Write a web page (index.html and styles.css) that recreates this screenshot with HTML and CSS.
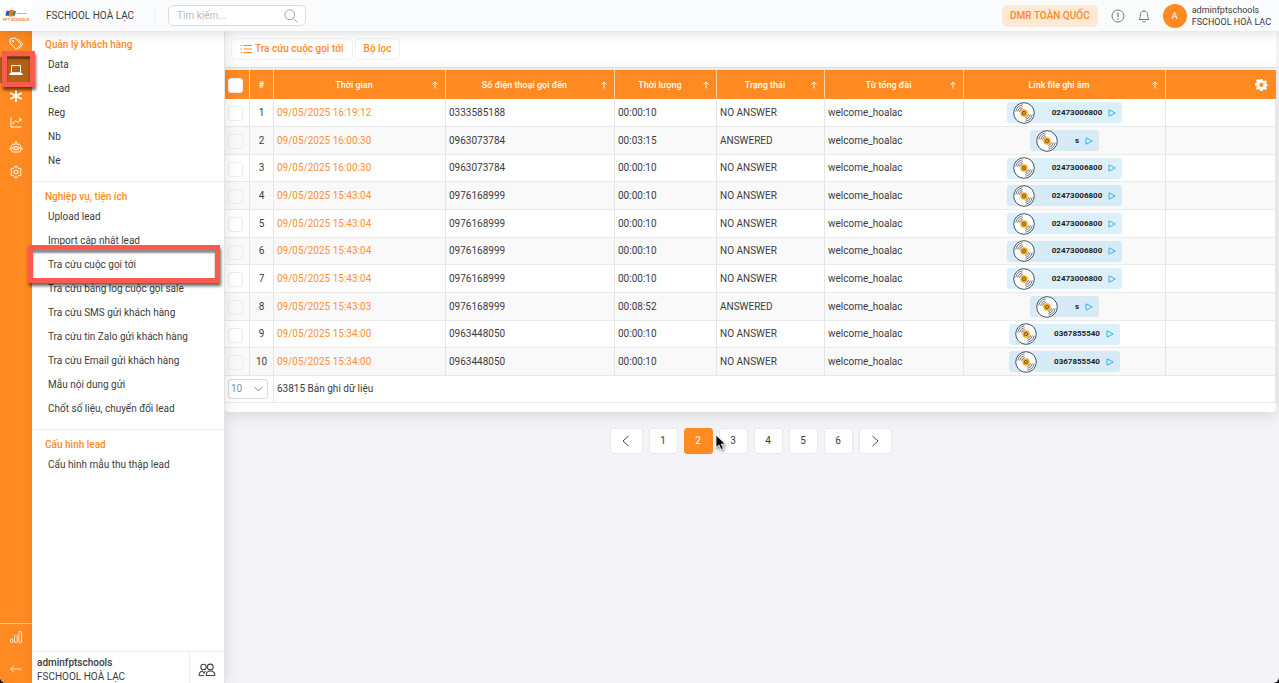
FILE: index.html
```html
<!DOCTYPE html>
<html lang="vi">
<head>
<meta charset="utf-8">
<title>Tra cứu cuộc gọi tới</title>
<link rel="stylesheet" href="styles.css">
</head>
<body>
<svg class="defs" aria-hidden="true">
  <symbol id="disc" viewBox="0 0 22 22">
    <circle cx="11" cy="11" r="10.3" fill="#fff" stroke="#4b555c" stroke-width="1"/>
    <g fill="none" stroke="#4b555c" stroke-width=".8">
      <path d="M2.800 9.500A8.300 8.300 0 0 1 9.500 2.800M4.600 9.500A6.500 6.500 0 0 1 9.500 4.600M6.400 9.700A4.800 4.800 0 0 1 9.700 6.400"/>
      <path d="M19.200 12.500A8.300 8.300 0 0 1 12.500 19.200M17.400 12.500A6.500 6.500 0 0 1 12.500 17.400M15.600 12.300A4.800 4.800 0 0 1 12.300 15.600"/>
    </g>
    <circle cx="11" cy="11" r="3.700" fill="#fba919"/>
    <circle cx="11" cy="11" r="1.600" fill="#fba919" stroke="#5b5040" stroke-width=".9"/>
  </symbol>
  <symbol id="play" viewBox="0 0 8 8"><path d="M1 .8 7.2 4 1 7.2Z" fill="none" stroke="#35b4ea" stroke-width="1"/></symbol>
  <symbol id="up" viewBox="0 0 8 8"><path d="M4 7.500V1M1.500 3.500 4 1l2.500 2.500" fill="none" stroke="#fff" stroke-width="1"/></symbol>
</svg>
<div class="app">
  <header class="topbar">
    <a class="logo" href="#" aria-label="FPT Schools">
      <svg class="logo-mark" viewBox="0 0 22 7" aria-hidden="true">
        <path d="M1.500.8h3.600L4 5.800H.4Z" fill="#1d63b0"/><path d="M5.200 0h3.600L7.600 6.500H3.900Z" fill="#f37021"/><path d="M8.300 1h2.700L9.900 5.800H7.300Z" fill="#2f8a7a"/>
        <path d="M12.500 3.500h9" stroke="#7db3e6" stroke-width="1.200" stroke-dasharray="2.500 .400"/>
      </svg>
      <span class="logo-name">FPT SCHOOLS</span>
    </a>
    <span class="school">FSCHOOL HOÀ LẠC</span>
    <form class="search">
      <input type="search" aria-label="Tìm kiếm" placeholder="Tìm kiếm...">
      <svg viewBox="0 0 14 14" aria-hidden="true"><circle cx="5.800" cy="5.800" r="4.900" fill="none" stroke="#a3a3a3"/><path d="m9.400 9.400 4 4" stroke="#a3a3a3"/></svg>
    </form>
    <button class="region" type="button">DMR TOÀN QUỐC</button>
    <button class="icon-btn" type="button" aria-label="Thông tin"><svg viewBox="0 0 14 14"><circle cx="7" cy="7" r="6" fill="none" stroke="#777"/><path d="M7 3.500v4.500M7 9.300v1.400" stroke="#777" stroke-width="1.200"/></svg></button>
    <button class="icon-btn" type="button" aria-label="Thông báo"><svg viewBox="0 0 14 14"><path d="M2 10.500c1-1 1.300-2 1.300-4.500C3.300 3.500 5 2 7 2s3.700 1.500 3.700 4c0 2.500.3 3.500 1.300 4.500ZM7 2V.9M5.500 12.200c.6.900 2.400.9 3 0" fill="none" stroke="#777"/></svg></button>
    <div class="account"><span class="avatar">A</span><span class="who"><span>adminfptschools</span><span>FSCHOOL HOÀ LẠC</span></span></div>
  </header>
  <div class="body">
    <nav class="rail" aria-label="Phân hệ">
      <a href="#" aria-label="Thẻ"><svg viewBox="0 0 14 14"><path d="M1.200 1.800 5.800 1l5.700 5.700a1 1 0 0 1 0 1.300l-3.700 3.700a1 1 0 0 1-1.300 0L1 6ZM8 1.200l5.200 5.300a1.200 1.200 0 0 1 0 1.700L9.300 12"/><circle cx="4" cy="4.200" r=".8"/></svg></a>
      <a class="on" href="#" aria-label="Khách hàng"><svg viewBox="0 0 14 14"><path d="M2.500 2.500h9v7.200h-9z"/><path d="M.8 10.500h12.400v1H.8z"/></svg></a>
      <a href="#" aria-label="Dịch vụ"><svg viewBox="0 0 14 14"><path stroke-width="1.700" d="M7 1v12M1.300 4 12.700 10M1.300 10 12.700 4"/></svg></a>
      <a href="#" aria-label="Thống kê"><svg viewBox="0 0 14 14"><path d="M2 2.500v9.500h10.500M3.500 9l3-3.500 2.300 2L12 4M9.800 3.800H12V6"/></svg></a>
      <a href="#" aria-label="Robot"><svg viewBox="0 0 14 14"><path d="M7 3.700V2M6 1.700h2M5 4h4c1.900 0 2.700 1.700 2.900 4.300.1 2.300-.6 3.700-2.300 3.700H4.400c-1.700 0-2.400-1.400-2.300-3.700C2.300 5.700 3.100 4 5 4ZM1 7.500v2.500M13 7.500v2.500"/><rect x="3.700" y="6.800" width="6.600" height="2.800" rx="1.400"/><path d="M5.200 8.200h1M7.800 8.200h1" stroke-width="1.300"/></svg></a>
      <a href="#" aria-label="Cài đặt"><svg viewBox="0 0 14 14"><path d="M5.500 2.700 6 1.300h2l.5 1.400 1.300.8 1.500-.3 1 1.800-1 1.100v1.700l1 1.200-1 1.800-1.500-.3-1.300.8L8 12.700H6l-.5-1.400-1.300-.8-1.500.3-1-1.800 1-1.200V6.100l-1-1.100 1-1.800 1.500.3Z"/><circle cx="7" cy="7" r="2"/></svg></a>
      <div class="rail-end">
        <a href="#" aria-label="Báo cáo"><svg viewBox="0 0 14 14"><rect x="1.500" y="9" width="2.500" height="3.500" rx=".7"/><rect x="5.500" y="5.500" width="2.700" height="7" rx=".7"/><rect x="9.800" y="1.500" width="2.700" height="11" rx=".7"/></svg></a>
        <a href="#" aria-label="Thu gọn"><svg viewBox="0 0 14 14"><path d="M12.500 7h-11M5 3.500 1.500 7 5 10.500"/></svg></a>
      </div>
    </nav>
    <aside class="sidebar">
      <div class="menus">
        <section><h2>Quản lý khách hàng</h2><a href="#">Data</a><a href="#">Lead</a><a href="#">Reg</a><a href="#">Nb</a><a href="#">Ne</a></section>
        <section><h2>Nghiệp vụ, tiện ích</h2><a href="#">Upload lead</a><a href="#">Import cập nhật lead</a><a href="#">Tra cứu cuộc gọi tới</a><a href="#">Tra cứu bảng log cuộc gọi sale</a><a href="#">Tra cứu SMS gửi khách hàng</a><a href="#">Tra cứu tin Zalo gửi khách hàng</a><a href="#">Tra cứu Email gửi khách hàng</a><a href="#">Mẫu nội dung gửi</a><a href="#">Chốt số liệu, chuyển đổi lead</a></section>
        <section><h2>Cấu hình lead</h2><a href="#">Cấu hình mẫu thu thập lead</a></section>
      </div>
      <div class="side-foot">
        <div class="side-user"><strong>adminfptschools</strong><span>FSCHOOL HOÀ LẠC</span></div>
        <button type="button" aria-label="Người dùng"><svg viewBox="0 0 18 14"><g fill="none" stroke="#444" stroke-width="1.100"><circle cx="5.500" cy="4" r="2.700"/><circle cx="12.300" cy="4" r="2.900"/><path d="M8.200 12.500c0-3 1.800-4.500 4.200-4.500s4.400 1.500 4.400 4.500ZM6 12.500H1.200c0-2.500 1-4.200 3.300-4.500l1.500 2 1.500-1.800"/></g></svg></button>
      </div>
    </aside>
    <main class="main">
      <div class="toolbar">
        <button type="button"><svg viewBox="0 0 12 10" aria-hidden="true"><path d="M3.500 1.500H12M3.500 5H12M3.500 8.500H12M.5 1.500h1.300M.5 5h1.300M.5 8.500h1.300" stroke="#ff8a22" stroke-width="1"/></svg>Tra cứu cuộc gọi tới</button>
        <button type="button">Bộ lọc</button>
      </div>
      <div class="card">
        <table>
          <colgroup><col class="c-check"><col class="c-no"><col class="c-time"><col class="c-phone"><col class="c-dur"><col class="c-state"><col class="c-pbx"><col class="c-link"><col></colgroup>
          <thead><tr>
            <th class="pick"><input type="checkbox" aria-label="Chọn tất cả"></th><th>#</th>
            <th><div class="head"><span>Thời gian</span><svg><use href="#up"/></svg></div></th>
            <th><div class="head"><span>Số điện thoại gọi đến</span><svg><use href="#up"/></svg></div></th>
            <th><div class="head"><span>Thời lượng</span><svg><use href="#up"/></svg></div></th>
            <th><div class="head"><span>Trạng thái</span><svg><use href="#up"/></svg></div></th>
            <th><div class="head"><span>Từ tổng đài</span><svg><use href="#up"/></svg></div></th>
            <th><div class="head"><span>Link file ghi âm</span><svg><use href="#up"/></svg></div></th>
            <th class="config"><button type="button" aria-label="Cấu hình cột"><svg viewBox="0 0 14 14"><path fill="#fff" fill-rule="evenodd" d="M5.700 1h2.600l.4 1.800 1 .5 1.700-1 1.600 1.700-1 1.600.4 1.100L14 7v1.300l-1.600.4-.4 1 1 1.600-1.700 1.700-1.600-1-1 .4L8.300 14H5.700l-.4-1.600-1-.4-1.600 1L1 11.300l1-1.600-.4-1L0 8.300V5.700l1.600-.4.4-1-1-1.600L2.700 1l1.600 1 1-.2ZM7 5A2.300 2.300 0 1 0 7 9.600 2.300 2.300 0 1 0 7 5Z"/></svg></button></th>
          </tr></thead>
          <tbody id="calls"></tbody>
          <tfoot><tr>
            <td colspan="2" class="size"><select aria-label="Số bản ghi"><option>10</option></select></td>
            <td colspan="7">63815 Bản ghi dữ liệu</td>
          </tr></tfoot>
        </table>
      </div>
      <nav class="pages" aria-label="Phân trang">
        <button class="wide" type="button" aria-label="Trang trước"><svg viewBox="0 0 12 12"><path d="M8.500 1 3 6l5.500 5" fill="none" stroke="#444"/></svg></button>
        <button type="button">1</button><button class="on" type="button" aria-current="page">2</button><button type="button">3</button><button type="button">4</button><button type="button">5</button><button type="button">6</button>
        <button class="wide" type="button" aria-label="Trang sau"><svg viewBox="0 0 12 12"><path d="M3.500 1 9 6l-5.500 5" fill="none" stroke="#444"/></svg></button>
      </nav>
    </main>
  </div>
  <div class="mark mark-rail"></div>
  <div class="mark mark-item"></div>
  <svg class="cursor" viewBox="0 0 12 18" aria-hidden="true"><path d="M1 1v12.500l3-2.700 2 4.700 2.300-1-2-4.500h4Z" fill="#000" stroke="#fff" stroke-width=".8"/></svg>
</div>
<script src="calls.js"></script>
</body>
</html>
```
FILE: styles.css
```css
* { box-sizing: border-box; }
body { margin: 0; background: #111; color: #3c3c3c; font: 10px/16px Roboto, "Noto Sans", sans-serif; }
button, input, select { font: inherit; color: inherit; margin: 0; }
button { padding: 0; border: 0; background: none; }
a { color: inherit; text-decoration: none; }
svg { display: block; flex: none; }
.defs { position: absolute; width: 0; height: 0; }
.app { position: relative; display: flex; flex-direction: column; height: 100vh; overflow: hidden; border-radius: 0 0 6px 6px; background: #f3f3f8; }

.topbar { position: relative; z-index: 2; display: flex; align-items: center; height: 31px; padding-right: 8px; background: #fafbfd; box-shadow: 0 1px 14px rgba(0, 0, 0, .16); }
.logo { display: flex; flex-direction: column; align-items: center; justify-content: center; width: 32px; height: 31px; background: #fff; }
.logo-mark { width: 22px; height: 7px; }
.logo-name { color: #f08040; font-size: 4px; line-height: 5px; font-weight: 700; }
.school { padding: 0 20px 0 14px; border-right: 1px solid #efefef; white-space: nowrap; }
.search { position: relative; width: 138px; margin: 0 auto 0 13px; }
.search input { width: 100%; height: 21px; padding: 0 28px 0 8px; border: 1px solid #dcdcdc; border-radius: 5px; outline: 0; background: #fff; appearance: none; display: block; }
.search input::placeholder { color: #bdbdbd; }
.search svg { position: absolute; right: 8px; top: 4px; width: 14px; height: 14px; }
.region { height: 22px; padding: 0 8px; margin-right: 13px; border-radius: 5px; background: #fee8d6; color: #ff8a22; font-weight: 500; }
.icon-btn { margin-right: 12px; }
.icon-btn svg { width: 14px; height: 14px; }
.account { display: flex; align-items: center; gap: 5px; }
.avatar { width: 24px; height: 24px; border-radius: 50%; background: #ff8a22; color: #fff; font-size: 9px; line-height: 24px; text-align: center; }
.who { display: flex; flex-direction: column; font-size: 9px; line-height: 12px; }

.body { display: flex; flex: 1; min-height: 0; }
.rail { display: flex; flex-direction: column; width: 32px; background: #ff8a22; }
.rail a { display: grid; place-items: center; height: 26px; }
.rail > a:nth-child(n+4) { height: 25px; }
.rail .on { background: #b36018; }
.rail svg { width: 14px; height: 14px; fill: none; stroke: #fff; stroke-width: 1; }
.rail-end { margin-top: auto; border-top: 1px solid #ffc890; }
.rail-end a { height: 26px; }
.rail-end a + a { height: 33px; padding-top: 4px; }
.rail-end svg { stroke: #ffe6cf; }

.sidebar { position: relative; z-index: 1; display: flex; flex-direction: column; width: 193px; border-right: 1px solid #e4e4e8; background: #fff; box-shadow: 2px 0 12px rgba(0, 0, 0, .1); }
.menus { flex: 1; min-height: 0; overflow: hidden; }
.menus section { padding: 7px 0 8px; border-bottom: 1px solid #ededed; }
.menus section:first-child { padding-top: 6px; }
.menus section:last-child { border: 0; }
.menus h2 { margin: 0; padding-left: 13px; color: #ff8a22; font-size: 10px; line-height: 16px; font-weight: 500; }
.menus a { display: block; padding-left: 16px; line-height: 24px; white-space: nowrap; }
.side-foot { display: flex; height: 32px; border-top: 1px solid #ececec; }
.side-user { flex: 1; display: flex; flex-direction: column; padding: 4px 0 0 5px; line-height: 14px; white-space: nowrap; }
.side-user strong { font-weight: 500; }
.side-foot button { display: grid; place-items: center; width: 35px; padding-top: 4px; border-left: 1px solid #eee; }
.side-foot button svg { width: 18px; height: 14px; }

.main { flex: 1; min-width: 0; padding-right: 3px; }
.toolbar { display: flex; gap: 2px; padding: 7px 6px; margin-bottom: 2px; border-bottom: 1px solid #e4e4e8; background: #fff; }
.toolbar button { display: flex; align-items: center; gap: 3px; height: 22px; padding: 0 8px; border: 1px solid #f1f1f4; border-radius: 5px; color: #ff8a22; font-weight: 500; }
.toolbar svg { width: 12px; height: 10px; }
.card { padding-bottom: 9px; border-radius: 0 0 4px 4px; background: #fff; box-shadow: 0 3px 16px rgba(0, 0, 0, .12); }
table { width: 100%; table-layout: fixed; border-collapse: separate; border-spacing: 0; line-height: 12px; }
.c-check { width: 25px; }
.c-no { width: 24px; }
.c-time { width: 172px; }
.c-phone { width: 169px; }
.c-dur { width: 102px; }
.c-state { width: 108px; }
.c-pbx { width: 139px; }
.c-link { width: 202px; }
th { height: 29px; padding: 0 6px 0 3px; border-right: 1px solid #ffd3a8; background: #ff8a22; color: #fff; font-size: 9px; font-weight: 500; }
th:nth-child(2) { padding: 0; }
.head { display: flex; align-items: center; }
.head span { flex: 1; text-align: center; white-space: nowrap; }
.head svg { width: 8px; height: 8px; }
th.config { border: 0; padding-right: 8px; }
.config button { display: block; margin-left: auto; }
.config svg { width: 13px; height: 13px; }
td { height: 28px; padding: 0 3px; border-right: 1px solid #e6e6e8; border-bottom: 1px solid #e9e9eb; white-space: nowrap; }
tbody tr:nth-child(3n) td { height: 27px; }
tbody tr:nth-child(even) { background: #f9f9f9; }
td.no { text-align: center; padding: 0; }
td.time { color: #fb9034; }
td.link { padding: 0; }
th.pick, td.pick { padding: 0 0 0 3px; }
.pick input { display: block; width: 15px; height: 15px; margin: 0; appearance: none; border: 1px solid #ededf0; border-radius: 3px; background: #fff; }
thead .pick input { margin-top: 2px; }
tbody .pick input { margin-top: 2px; background: transparent; }
.audio { display: flex; align-items: center; width: max-content; height: 21px; margin: 0 auto; padding: 0 6px; border-radius: 3px; background: rgba(75, 178, 232, .2); color: #222; font-size: 8px; font-weight: 700; }
.audio .disc { width: 22px; height: 22px; margin-right: 17px; }
.audio .play { width: 8px; height: 8px; margin-left: 6px; }
tfoot td { height: 27px; }
.size select { display: block; width: 40px; height: 20px; padding: 0 2px; border: 1px solid #d9d9de; border-radius: 3px; color: #8790a0; appearance: none; background: no-repeat right 4px center / 9px 6px url("data:image/svg+xml,%3Csvg xmlns='http://www.w3.org/2000/svg' viewBox='0 0 9 6'%3E%3Cpath d='M.5 1l4 4 4-4' fill='none' stroke='%238790a0'/%3E%3C/svg%3E"); }

.pages { display: flex; justify-content: center; gap: 6px; margin-top: 16px; }
.pages button { display: grid; place-items: center; width: 29px; height: 26px; border: 1px solid #e8e8ec; border-radius: 3px; background: #fff; }
.pages .wide { width: 33px; }
.pages .on { border-color: #ff8a22; background: #ff8a22; color: #fff; }
.pages svg { width: 12px; height: 12px; }

.mark { position: absolute; z-index: 3; border: 5px solid #fb5b4e; box-shadow: 1px 3px 3px rgba(0, 0, 0, .6), inset 0 3px 2px rgba(0, 0, 0, .45); }
.mark-rail { left: 2px; top: 51px; width: 33px; height: 36px; }
.mark-item { left: 28px; top: 245px; width: 192px; height: 38px; }
.cursor { position: absolute; z-index: 4; left: 715px; top: 434px; width: 12px; height: 18px; filter: drop-shadow(1px 2px 1px rgba(0, 0, 0, .4)); }
```
FILE: calls.js
```js
const calls = [
  ["09/05/2025 16:19:12", "0333585188", "00:00:10", "NO ANSWER", "02473006800"],
  ["09/05/2025 16:00:30", "0963073784", "00:03:15", "ANSWERED", "s"],
  ["09/05/2025 16:00:30", "0963073784", "00:00:10", "NO ANSWER", "02473006800"],
  ["09/05/2025 15:43:04", "0976168999", "00:00:10", "NO ANSWER", "02473006800"],
  ["09/05/2025 15:43:04", "0976168999", "00:00:10", "NO ANSWER", "02473006800"],
  ["09/05/2025 15:43:04", "0976168999", "00:00:10", "NO ANSWER", "02473006800"],
  ["09/05/2025 15:43:04", "0976168999", "00:00:10", "NO ANSWER", "02473006800"],
  ["09/05/2025 15:43:03", "0976168999", "00:08:52", "ANSWERED", "s"],
  ["09/05/2025 15:34:00", "0963448050", "00:00:10", "NO ANSWER", "0367855540"],
  ["09/05/2025 15:34:00", "0963448050", "00:00:10", "NO ANSWER", "0367855540"]
];
document.getElementById("calls").innerHTML = calls.map(([time, phone, duration, state, line], i) => `
  <tr>
    <td class="pick"><input type="checkbox" aria-label="Chọn dòng ${i + 1}"></td>
    <td class="no">${i + 1}</td>
    <td class="time">${time}</td>
    <td>${phone}</td>
    <td>${duration}</td>
    <td>${state}</td>
    <td>welcome_hoalac</td>
    <td class="link"><a class="audio" href="#"><svg class="disc"><use href="#disc"/></svg>${line}<svg class="play"><use href="#play"/></svg></a></td>
    <td></td>
  </tr>`).join("");
```
